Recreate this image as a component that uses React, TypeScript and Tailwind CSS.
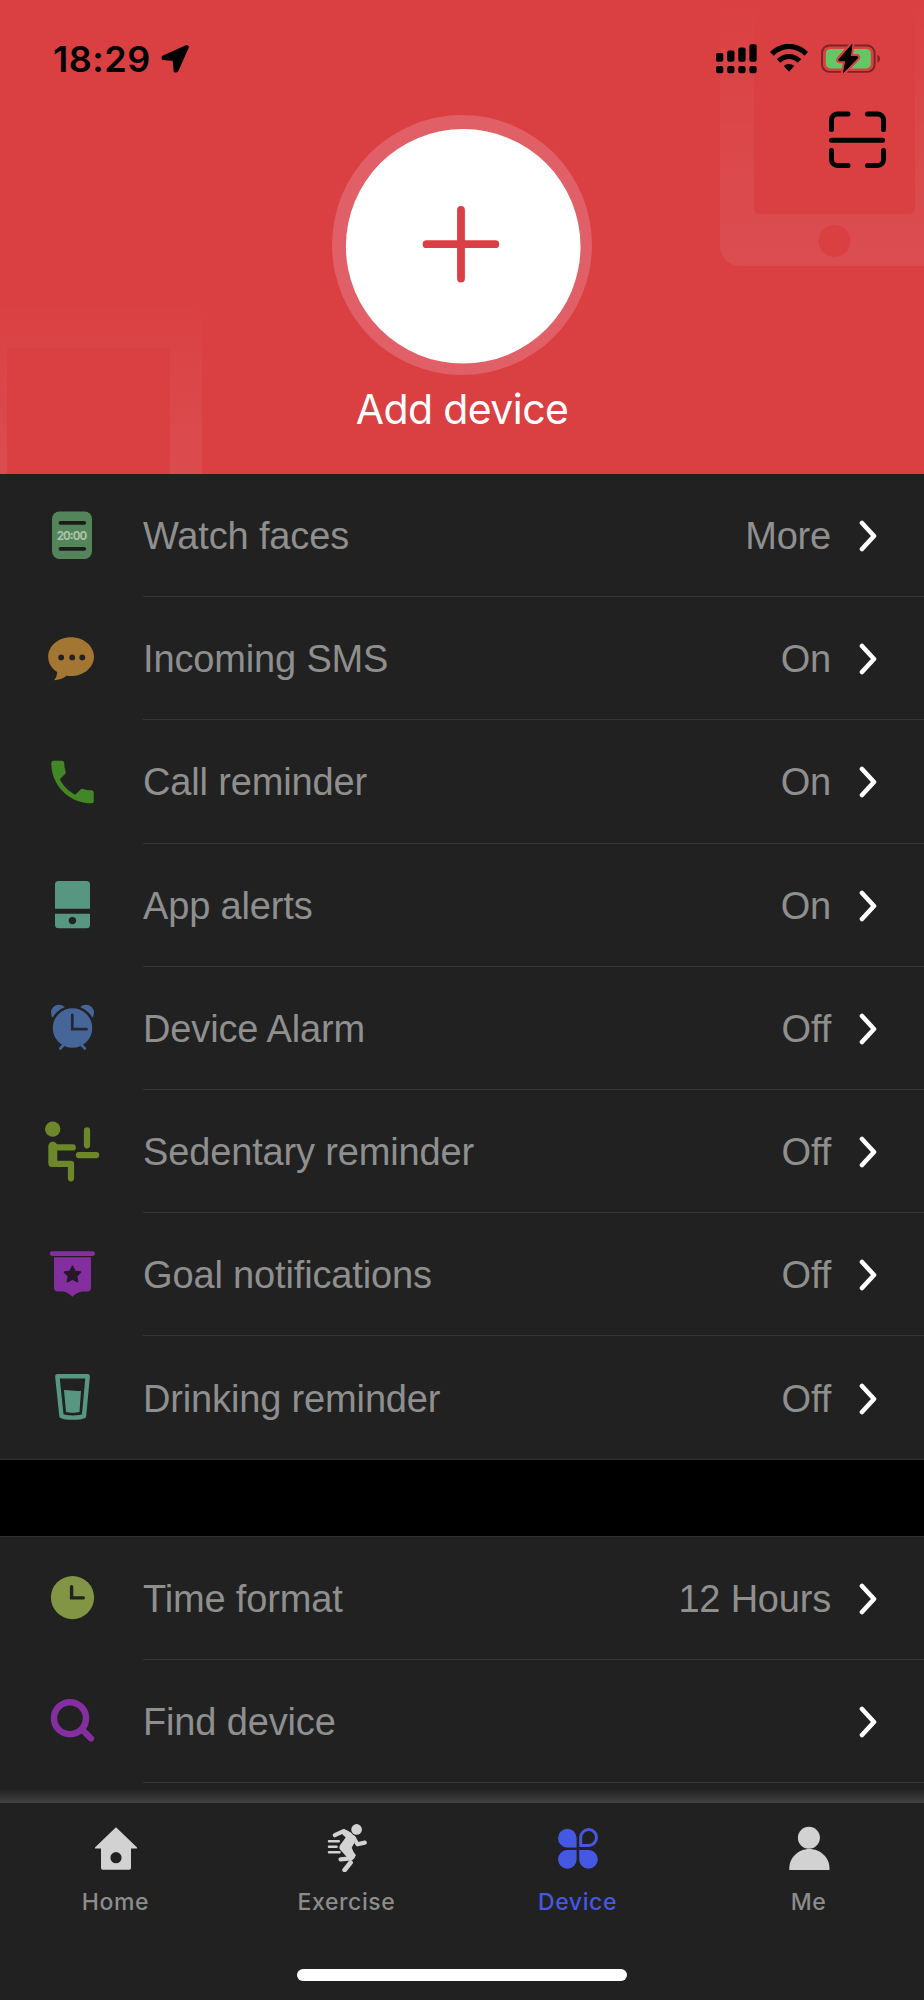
import type { ReactNode } from "react";
import { clsx } from "clsx";

type Item = { label: string; value?: string; icon: ReactNode };

const alertItems: Item[] = [
  {
    label: "Watch faces",
    value: "More",
    icon: (
      <>
        <rect x="12" y="7.4" width="40" height="47.6" rx="7.5" fill="#548459" />
        <path d="M20.5 18.8H44.2M20.5 44.8H44.2" stroke="#1b1b1b" strokeWidth="3.8" strokeLinecap="round" />
        <text x="32" y="35.8" textAnchor="middle" textLength="30.5" fontSize="11.5" fontWeight="700" fontFamily="Inter, sans-serif" fill="#a9c3a8">
          20:00
        </text>
      </>
    ),
  },
  {
    label: "Incoming SMS",
    value: "On",
    icon: (
      <>
        <path
          d="M31 10.2C43.6 10.2 54 18.9 54 29.7S43.6 49 31 49c-1.8 0-3-.3-4.4-.3C23.5 51.3 18.5 53 14 53.3c2.2-2.7 3.3-5.5 3.2-8.3C11.5 41.5 8.2 36 8.2 29.7 8.2 18.9 18.4 10.2 31 10.2Z"
          fill="#a37633"
        />
        <circle cx="21.2" cy="30.4" r="2.9" fill="#212121" />
        <circle cx="32.2" cy="30.4" r="2.9" fill="#212121" />
        <circle cx="42.3" cy="30.4" r="2.9" fill="#212121" />
      </>
    ),
  },
  {
    label: "Call reminder",
    value: "On",
    icon: (
      <path
        transform="translate(4.2 3.7) scale(2.36)"
        d="M6.62 10.79c1.44 2.83 3.76 5.14 6.59 6.59l2.2-2.2c.27-.27.67-.36 1.02-.24 1.12.37 2.33.57 3.57.57.55 0 1 .45 1 1V20c0 .55-.45 1-1 1-9.39 0-17-7.61-17-17 0-.55.45-1 1-1h3.5c.55 0 1 .45 1 1 0 1.25.2 2.45.57 3.57.11.35.03.74-.25 1.02l-2.2 2.2z"
        fill="#438626"
      />
    ),
  },
  {
    label: "App alerts",
    value: "On",
    icon: (
      <>
        <path d="M15 35.8V11.5a3.5 3.5 0 0 1 3.5-3.5h28a3.5 3.5 0 0 1 3.5 3.5V35.8ZM15 40.7H50V51.7a3.5 3.5 0 0 1-3.5 3.5h-28a3.5 3.5 0 0 1-3.5-3.5Z" fill="#579681" />
        <circle cx="32.4" cy="47.6" r="3.7" fill="#1d2422" />
      </>
    ),
  },
  {
    label: "Device Alarm",
    value: "Off",
    icon: (
      <>
        <circle cx="19" cy="16.7" r="8" fill="#466598" />
        <circle cx="46" cy="16.7" r="8" fill="#466598" />
        <circle cx="32.5" cy="32" r="21" fill="#466598" stroke="#212121" strokeWidth="2.6" />
        <path d="M24 48.5L20.3 52.5M41 48.5L44.9 52.5" stroke="#466598" strokeWidth="2.6" strokeLinecap="round" />
        <path d="M32.3 18.8V33.2H46.5" fill="none" stroke="#212836" strokeWidth="2.8" strokeLinecap="round" />
      </>
    ),
  },
  {
    label: "Sedentary reminder",
    value: "Off",
    icon: (
      <>
        <circle cx="12.7" cy="9.1" r="7.7" fill="#6d872b" />
        <g fill="none" stroke="#6d872b" strokeWidth="6.2" strokeLinecap="round" strokeLinejoin="round">
          <path d="M13 27.4H32.8M11.5 43.8H31V58.3M47 10.3V25.3M38.9 35.1H56.2" />
          <path d="M12.8 26.2V41.7" strokeWidth="9" />
        </g>
      </>
    ),
  },
  {
    label: "Goal notifications",
    value: "Off",
    icon: (
      <>
        <rect x="9.8" y="8.2" width="45.2" height="4.7" rx="2.35" fill="#842ea0" />
        <path d="M14 14.3H51V44.5a4 4 0 0 1-4 4H42C38 49.3 35 51.5 32.4 53.7 29.8 51.5 27 49.3 23 48.5H18a4 4 0 0 1-4-4Z" fill="#842ea0" />
        <path
          d="M32.5 23.4l2.4 5 5.5.8-4 3.8 1 5.5-4.9-2.6-4.9 2.6 1-5.5-4-3.8 5.5-.8z"
          fill="#261a2a"
          stroke="#261a2a"
          strokeWidth="1.8"
          strokeLinejoin="round"
        />
      </>
    ),
  },
  {
    label: "Drinking reminder",
    value: "Off",
    icon: (
      <>
        <path d="M17.3 10.3H47.7L44 50C40 52.2 25.5 52.2 21.5 50Z" fill="none" stroke="#579681" strokeWidth="4.4" strokeLinejoin="round" />
        <path d="M24 24C30 24 36 25.6 41 24.8L39.5 46C36 47 29.5 47 26 46Z" fill="#579681" />
      </>
    ),
  },
];

const deviceItems: Item[] = [
  {
    label: "Time format",
    value: "12 Hours",
    icon: (
      <>
        <circle cx="32.5" cy="30.6" r="21.6" fill="#819545" />
        <path d="M31.6 19.8V30.9H43.3" fill="none" stroke="#212121" strokeWidth="3.4" strokeLinecap="round" />
      </>
    ),
  },
  {
    label: "Find device",
    icon: (
      <g fill="none" stroke="#842ea0">
        <circle cx="30" cy="28.2" r="16" strokeWidth="6.5" />
        <path d="M42 39.5L51 48.5" strokeWidth="6.2" strokeLinecap="round" />
      </g>
    ),
  },
];

const tabs = [
  {
    label: "Home",
    icon: (
      <path
        fillRule="evenodd"
        d="M24 3.2L44.8 23.2c.7.7.4 1.4-.6 1.4H39V44a1.8 1.8 0 0 1-1.8 1.800H10.800A1.800 1.800 0 0 1 9 44V24.600H3.800c-1 0-1.300-.7-.6-1.400ZM24 28.100a5.600 5.600 0 1 0 0 11.200 5.600 5.600 0 0 0 0-11.200Z"
      />
    ),
  },
  {
    label: "Exercise",
    icon: (
      <>
        <circle cx="33.6" cy="5.4" r="5.3" />
        <path d="M20.5 5.2c3.5.6 7 2.7 9.5 5.6l3.3 3-2.3 6-3 5 5 6.5-3 4.5-6-2.5-7-7.8c-1-1.6-.8-3.2.4-4.8l5.3-7.2-3.7-3.5Z" />
        <g fill="none" stroke="currentColor" strokeLinecap="round" strokeLinejoin="round">
          <path d="M11.8 11.2L20.6 7.2L27 10.8" strokeWidth="4.2" />
          <path d="M30.5 13.5L34.5 20.3L41.8 18.6" strokeWidth="4.2" />
          <path d="M27 25L30 32.3L28 34.3L17.5 35.4" strokeWidth="4.2" />
          <path d="M27.6 38.5L21.6 46" strokeWidth="4.6" />
          <path d="M6 17.3H15.8M6 22.8H13.5M6 28.2H16.5" strokeWidth="2.5" />
        </g>
      </>
    ),
  },
  {
    label: "Device",
    active: true,
    icon: (
      <>
        <path d="M22.6 23.4H13a9.3 9.3 0 1 1 9.6-9.3ZM22.6 26.1H13a9.3 9.3 0 1 0 9.6 9.3ZM25.2 26.1h9.6a9.3 9.3 0 1 1-9.6 9.3Z" />
        <path d="M26.7 21.4V13.2a7.9 7.9 0 1 1 7.9 8.2Z" fill="none" stroke="currentColor" strokeWidth="3" />
      </>
    ),
  },
  {
    label: "Me",
    icon: (
      <>
        <circle cx="23.9" cy="13.8" r="11" />
        <path d="M4.3 46V44.500C4.300 33.500 13.300 25 24.400 25S44.500 33.500 44.500 44.500V46Z" />
      </>
    ),
  },
];

const StatusBar = () => (
  <div className="flex items-start justify-between pr-[43px] pl-[53px] pt-[36px]">
    <div className="flex items-center">
      <span className="w-[98px] font-[Inter,sans-serif] text-[36px] leading-[46px] font-semibold tracking-[0.5px] whitespace-nowrap text-black">18:29</span>
      <svg className="ml-[9px]" width="30" height="30" viewBox="0 0 30 30">
        <path d="M26.5 2.5L3 13V14.6L14 15.6L15 27L17 26.8L27.5 3Z" stroke="#000" strokeWidth="2.8" strokeLinejoin="round" />
      </svg>
    </div>
    <svg className="mt-2" width="167" height="32" viewBox="714 44 167 32">
      <g>
        <rect x="716" y="53" width="7.3" height="8.8" rx="2" />
        <rect x="727.2" y="50.5" width="7.3" height="11.3" rx="2" />
        <rect x="738.3" y="47.5" width="7.3" height="14.3" rx="2" />
        <rect x="749.4" y="44.2" width="7.3" height="17.6" rx="2" />
        <rect x="716" y="66" width="7.3" height="7.3" rx="2.2" />
        <rect x="727.2" y="66" width="7.3" height="7.3" rx="2.2" />
        <rect x="738.3" y="66" width="7.3" height="7.3" rx="2.2" />
        <rect x="749.4" y="66" width="7.3" height="7.3" rx="2.2" />
      </g>
      <g fill="none" stroke="#000" strokeWidth="5.2">
        <path d="M771.8 53.8C782 43.9 796 43.9 806.2 53.8" />
        <path d="M778.6 61C784.7 55 793.3 55 799.4 61" />
      </g>
      <path d="M783.8 66C786.6 63.3 791.4 63.3 794.2 66L789 71.8Z" />
      <rect x="822" y="45.5" width="52.6" height="26.4" rx="7.5" fill="none" stroke="#7c2426" strokeWidth="1.9" />
      <path d="M877.5 54.8C880.8 56.3 880.8 61.4 877.5 62.7Z" fill="#7c2426" />
      <rect x="825.8" y="49" width="45" height="19.4" rx="4.5" fill="#65c666" />
      <path
        d="M852 44.5L838.8 59.5C838.3 60.3 838.7 60.7 839.5 60.7H845.8L843.5 72.5L857.5 58C858 57.3 857.8 56.6 856.9 56.6H850.3Z"
        stroke="#d64142"
        strokeWidth="5"
        strokeLinejoin="round"
      />
      <path d="M852 44.5L838.8 59.5C838.3 60.3 838.7 60.7 839.5 60.7H845.8L843.5 72.5L857.5 58C858 57.3 857.8 56.6 856.9 56.6H850.3Z" stroke="#000" strokeWidth="1" strokeLinejoin="round" />
    </svg>
  </div>
);

const Header = () => (
  <header className="relative h-[474px] shrink-0 overflow-hidden bg-[#da3f41]">
    {/* faded phone silhouettes behind the content */}
    <svg className="absolute inset-0" width="924" height="474" viewBox="0 0 924 474">
      <defs>
        <linearGradient id="rightPhone" gradientUnits="userSpaceOnUse" x1="0" y1="0" x2="0" y2="266">
          <stop offset="0" stopColor="#fff" stopOpacity="0.005" />
          <stop offset="1" stopColor="#dce0ff" stopOpacity="0.09" />
        </linearGradient>
        <linearGradient id="leftPhone" gradientUnits="userSpaceOnUse" x1="0" y1="305" x2="0" y2="474">
          <stop offset="0" stopColor="#fff" stopOpacity="0.01" />
          <stop offset="1" stopColor="#dce0ff" stopOpacity="0.08" />
        </linearGradient>
      </defs>
      <path
        fillRule="evenodd"
        fill="url(#rightPhone)"
        d="M720 0H924V266H740a20 20 0 0 1-20-20ZM754 0V209a5 5 0 0 0 5 5H909a6 6 0 0 0 6-6V0ZM834.5 225a16 16 0 1 0 0 32 16 16 0 0 0 0-32Z"
      />
      <path fillRule="evenodd" fill="url(#leftPhone)" d="M0 308H190a12 12 0 0 1 12 12V474H0ZM7 348V474H170V348Z" />
    </svg>
    <div className="relative flex flex-col">
      <StatusBar />
      <div className="flex h-[293px] items-start justify-center pt-[33px]">
        <svg width="260" height="260" viewBox="332 115 260 260">
          <circle cx="462" cy="245" r="130" fill="#e15f66" />
          <circle cx="463.2" cy="246.3" r="117.3" fill="#fff" />
          <path d="M426.5 244.2H495.3M461 210V278.5" stroke="#da3f45" strokeWidth="7.8" strokeLinecap="round" />
        </svg>
      </div>
      <p className="text-center font-[Inter,sans-serif] text-[41px] leading-[68px] font-normal tracking-[-0.6px] text-white">Add device</p>
      <svg className="absolute top-[109px] right-[36px]" width="60" height="60" viewBox="0 0 60 60" fill="none" stroke="#000" strokeWidth="5" strokeLinecap="round">
        <path d="M3.5 20.5V11a6 6 0 0 1 6-6H20M39.5 5H49.5a6 6 0 0 1 6 6V20.5M3.5 41.5V50.5a6 6 0 0 0 6 6H20M39.500 56.500H49.500a6 6 0 0 0 6-6V41.500M3.500 31.200H54.500" />
      </svg>
    </div>
  </header>
);

const SettingRow = ({ item, last }: { item: Item; last?: boolean }) => (
  <li className="flex h-[123.2px]">
    <div className="flex w-[143px] items-center pl-10">
      <svg width="64" height="64" viewBox="0 0 64 64">
        {item.icon}
      </svg>
    </div>
    <div className={clsx("flex flex-1 items-center pt-[2px] pr-[45px]", !last && "border-b border-[#353535]")}>
      <span className="flex-1 tracking-[-0.15px]">{item.label}</span>
      {item.value && <span className="tracking-[-0.2px]">{item.value}</span>}
      <svg className="ml-[28px]" width="20" height="32" viewBox="0 0 20 32" fill="none" stroke="#fff" strokeWidth="4.6">
        <path d="M3 3L15 16L3 29" strokeLinecap="round" strokeLinejoin="round" />
      </svg>
    </div>
  </li>
);

const TabBar = () => (
  <nav className="relative z-10 flex h-[197px] shrink-0 flex-col bg-[#212121]">
    <div className="absolute -top-[14px] right-0 left-0 h-[14px] bg-linear-to-b from-[#212121] to-[#434343]" />
    <div className="grid grid-cols-4 pt-[21px]">
      {tabs.map((tab) => (
        <div key={tab.label} className={clsx("flex flex-col items-center", tab.active ? "text-[#4558e2]" : "text-[#d2d2d2]")}>
          <svg width="48" height="48" viewBox="0 0 48 48" fill="currentColor">
            {tab.icon}
          </svg>
          <span className={clsx("mt-[15px] font-[Inter,sans-serif] text-[23px] leading-[30px] font-medium tracking-[0.6px]", !tab.active && "text-[#8c8c8c]")}>
            {tab.label}
          </span>
        </div>
      ))}
    </div>
    <div className="mx-auto mt-[52px] h-3 w-[330px] rounded-full bg-white" />
  </nav>
);

export default function App() {
  return (
    <div className="flex h-[2000px] w-[924px] flex-col overflow-hidden bg-black font-['Liberation_Sans',Arial,sans-serif]">
      <Header />
      <main className="h-[1329px] overflow-hidden text-[38px] leading-[44px] text-[#8f8f8f]">
        <ul className="h-[986px] border-b border-[#303030] bg-[#212121]">
          {alertItems.map((item, i) => (
            <SettingRow key={item.label} item={item} last={i === alertItems.length - 1} />
          ))}
        </ul>
        <ul className="mt-[76px] h-[267px] border-t border-[#303030] bg-[#212121]">
          {deviceItems.map((item) => (
            <SettingRow key={item.label} item={item} />
          ))}
        </ul>
      </main>
      <TabBar />
    </div>
  );
}
